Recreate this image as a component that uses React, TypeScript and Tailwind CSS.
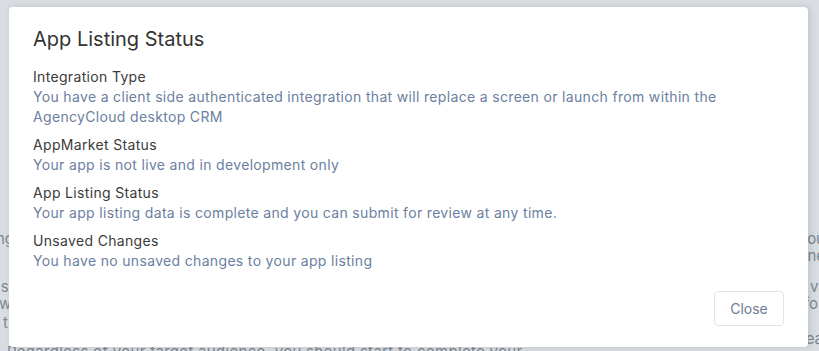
import React from 'react'

const ROWS = [
  {
    label: 'Integration Type',
    value:
      'You have a client side authenticated integration that will replace a screen or launch from within the AgencyCloud desktop CRM',
  },
  { label: 'AppMarket Status', value: 'Your app is not live and in development only' },
  {
    label: 'App Listing Status',
    value: 'Your app listing data is complete and you can submit for review at any time.',
  },
  { label: 'Unsaved Changes', value: 'You have no unsaved changes to your app listing' },
]

export default function App() {
  return (
    <div
      className="relative h-[351px] w-[819px] overflow-hidden bg-[#d9dde2]"
      style={{ fontFamily: 'Inter, "Noto Sans", sans-serif' }}
    >
      {/* page behind the overlay */}
      <div className="flex flex-col pt-[230px] text-[15px] leading-[17px] text-[#7b8796]">
        <div className="flex justify-between">
          <span className="-ml-[4px]">ng</span>
          <span className="-mr-[6px]">ou</span>
        </div>
        <div className="flex justify-end">
          <span className="-mr-[6px]">ne</span>
        </div>
        <div className="mt-[14px] flex justify-between">
          <span className="-ml-[3px]">is</span>
          <span className="-mr-[3px]">vi</span>
        </div>
        <div className="flex justify-between">
          <span className="-ml-[1px]">wi</span>
          <span className="mr-[1px]">fo</span>
        </div>
        <div className="mt-[2px] flex justify-between">
          <span className="ml-[3px]">t</span>
          <span></span>
        </div>
        <div className="mt-[-1px] flex justify-between">
          <span></span>
          <span className="-mr-[4px]">ea</span>
        </div>
        <div className="mt-[-4px] pl-[7px] tracking-[0.3px]">
          Regardless of your target audience, you should start to complete your
        </div>
      </div>

      {/* modal */}
      <div className="absolute left-[9px] top-[7px] flex w-[799px] flex-col rounded-[4px] bg-white px-6 pb-[21px] pt-[18px] shadow-[2px_0_6px_rgba(0,0,0,0.12)]">
        <h2 className="text-[20px] leading-7 text-[#333333]">App Listing Status</h2>
        <div className="mt-[14px] flex flex-col gap-2 text-sm leading-5 tracking-[0.33px]">
          {ROWS.map((row) => (
            <div key={row.label} className="flex flex-col">
              <div className="text-[#3b3b3b]">{row.label}</div>
              <div className="text-[#6b80a0]">{row.value}</div>
            </div>
          ))}
        </div>
        <div className="mt-5 flex justify-end">
          <button className="h-[35px] w-[70px] rounded-[4px] border border-[#e1e5ea] bg-white text-sm text-[#6d7c90]">
            Close
          </button>
        </div>
      </div>
    </div>
  )
}
